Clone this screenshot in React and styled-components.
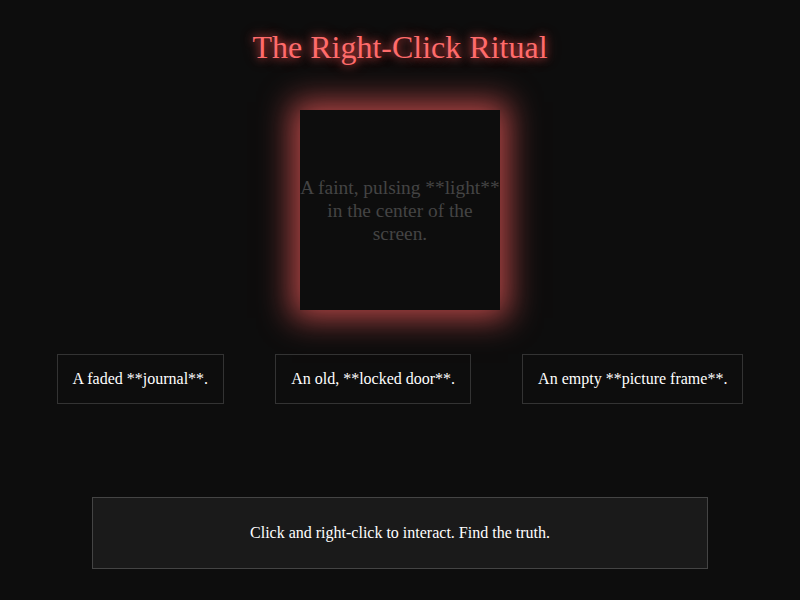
import React from 'react'
import styled, { createGlobalStyle } from 'styled-components'

const GlobalStyle = createGlobalStyle`
  body {
    margin: 8px;
    background: #0d0d0d;
    color: #fff;
    font-family: "Liberation Serif", "Times New Roman", serif;
  }
`

const Page = styled.div`
  padding: 0 8px;
  text-align: center;
`

const Title = styled.h1`
  font-size: 32px;
  font-weight: normal;
  color: #ff6b6b;
  margin: 21px 0;
  line-height: 37px;
  text-shadow: 0 0 8px rgba(255, 80, 80, 0.8), 0 0 16px rgba(255, 80, 80, 0.4);
`

const Light = styled.div`
  width: 200px;
  height: 200px;
  margin: 44px auto 0;
  background: #0d0d0d;
  box-shadow: 0 0 30px 8px rgba(255, 95, 95, 0.7);
  display: flex;
  align-items: center;
  justify-content: center;
  color: #444;
  font-size: 19.4px;
  line-height: 23px;
`

const Row = styled.div`
  display: flex;
  justify-content: center;
  gap: 51px;
  margin-top: 44px;
`

const Item = styled.div`
  border: 1px solid #333;
  padding: 15px;
  font-size: 16px;
  line-height: 18px;
  color: #fff;
`

const Message = styled.div`
  width: 80%;
  margin: 93px auto 0;
  background: #1a1a1a;
  border: 1px solid #444;
  padding: 26px 0;
  font-size: 16px;
  line-height: 18px;
  color: #fff;
`

const items = [
  'A faded **journal**.',
  'An old, **locked door**.',
  'An empty **picture frame**.',
]

export default function App() {
  return (
    <>
      <GlobalStyle />
      <Page>
        <Title>The Right-Click Ritual</Title>
        <Light>A faint, pulsing **light** in the center of the screen.</Light>
        <Row>
          {items.map((t) => (
            <Item key={t}>{t}</Item>
          ))}
        </Row>
        <Message>Click and right-click to interact. Find the truth.</Message>
      </Page>
    </>
  )
}
